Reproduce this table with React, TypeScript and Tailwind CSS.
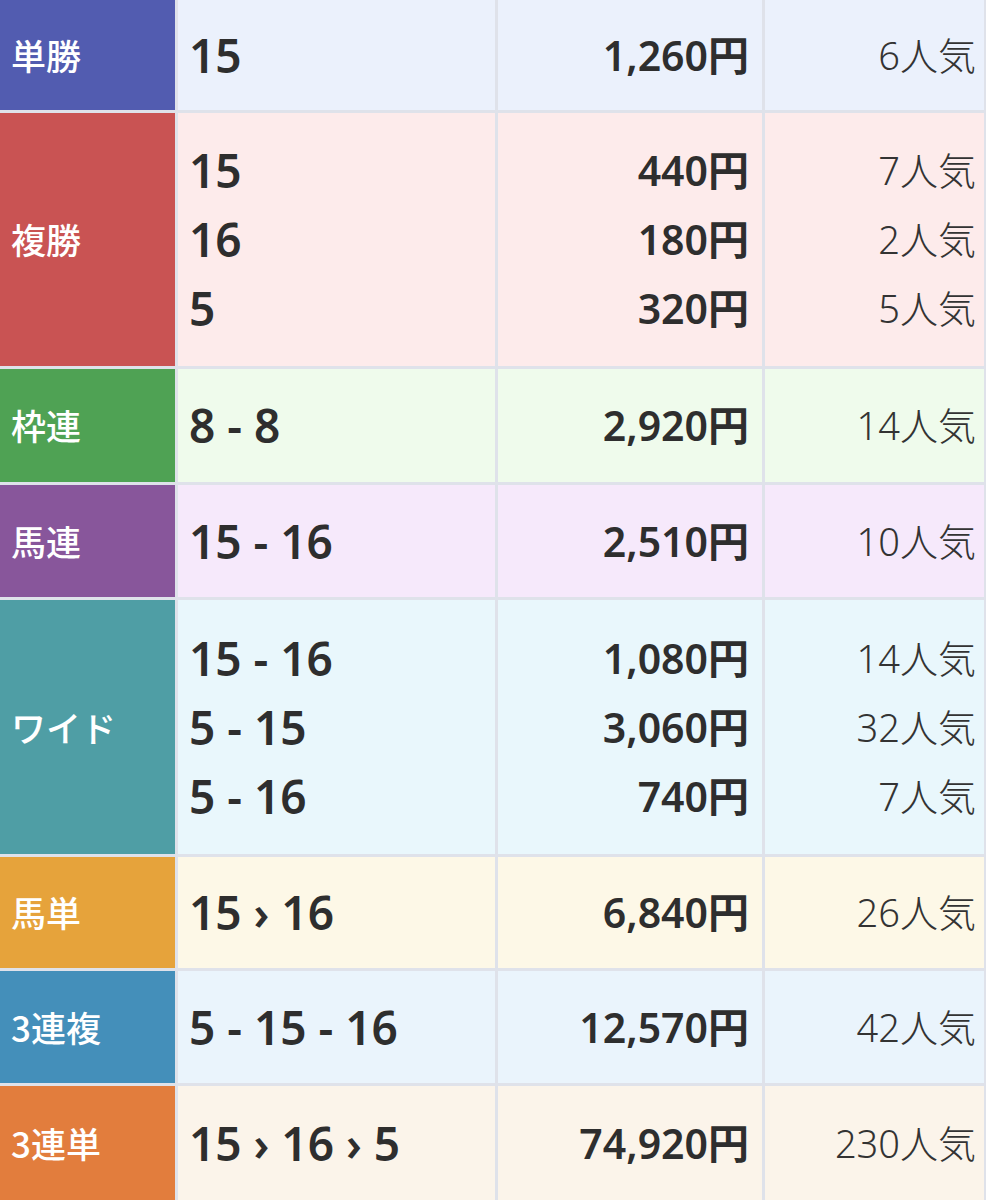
import React from 'react';

type Row = {
  label: string;
  labelBg: string;
  bg: string;
  h: string;
  lines: [string, string, string][];
};

const rows: Row[] = [
  { label: '単勝', labelBg: 'bg-[#525cb0]', bg: 'bg-[#ebf1fc]', h: 'h-[110px]', lines: [['15', '1,260円', '6人気']] },
  {
    label: '複勝',
    labelBg: 'bg-[#c95353]',
    bg: 'bg-[#fdebeb]',
    h: 'h-[253px]',
    lines: [
      ['15', '440円', '7人気'],
      ['16', '180円', '2人気'],
      ['5', '320円', '5人気'],
    ],
  },
  { label: '枠連', labelBg: 'bg-[#4fa254]', bg: 'bg-[#effbec]', h: 'h-[113px]', lines: [['8 - 8', '2,920円', '14人気']] },
  { label: '馬連', labelBg: 'bg-[#88569b]', bg: 'bg-[#f6e9fb]', h: 'h-[112px]', lines: [['15 - 16', '2,510円', '10人気']] },
  {
    label: 'ワイド',
    labelBg: 'bg-[#4f9ea5]',
    bg: 'bg-[#e9f7fc]',
    h: 'h-[254px]',
    lines: [
      ['15 - 16', '1,080円', '14人気'],
      ['5 - 15', '3,060円', '32人気'],
      ['5 - 16', '740円', '7人気'],
    ],
  },
  { label: '馬単', labelBg: 'bg-[#e6a33b]', bg: 'bg-[#fdf8e7]', h: 'h-[111px]', lines: [['15 › 16', '6,840円', '26人気']] },
  { label: '3連複', labelBg: 'bg-[#448fba]', bg: 'bg-[#eaf4fc]', h: 'h-[112px]', lines: [['5 - 15 - 16', '12,570円', '42人気']] },
  { label: '3連単', labelBg: 'bg-[#e27d3d]', bg: 'bg-[#fbf4ea]', h: 'h-[114px]', lines: [['15 › 16 › 5', '74,920円', '230人気']] },
];

const font = { fontFamily: '"Noto Sans", "Noto Sans CJK JP", sans-serif' };

export default function App() {
  return (
    <div className="w-[988px] h-[1200px] overflow-hidden bg-white">
      <div className="w-[986px] bg-[#dfe2ea] pr-[3px] flex flex-col gap-[3px]" style={font}>
        {rows.map((r) => (
          <div key={r.label} className={`grid grid-cols-[175px_317px_264px_219px] gap-x-[3px] ${r.h}`}>
            <div
              className={`${r.labelBg} flex items-center pl-[11px] text-white text-[35px] font-medium`}
              style={{ fontFamily: '"Noto Sans CJK JP", sans-serif' }}
            >
              {r.label}
            </div>
            <div className={`${r.bg} flex flex-col justify-center pl-[11px] text-[46px] font-semibold text-[#2e2e2e]`}>
              {r.lines.map((l, i) => (
                <div key={i} className="leading-[69px] whitespace-pre">
                  {l[0]}
                </div>
              ))}
            </div>
            <div className={`${r.bg} flex flex-col justify-center items-end pr-[13px] text-[41px] font-semibold text-[#2e2e2e]`}>
              {r.lines.map((l, i) => (
                <div key={i} className="leading-[69px]">
                  {l[1]}
                </div>
              ))}
            </div>
            <div className={`${r.bg} flex flex-col justify-center items-end pr-[8px] text-[38px] font-light text-[#333]`}>
              {r.lines.map((l, i) => (
                <div key={i} className="leading-[69px]">
                  {l[2]}
                </div>
              ))}
            </div>
          </div>
        ))}
      </div>
    </div>
  );
}
